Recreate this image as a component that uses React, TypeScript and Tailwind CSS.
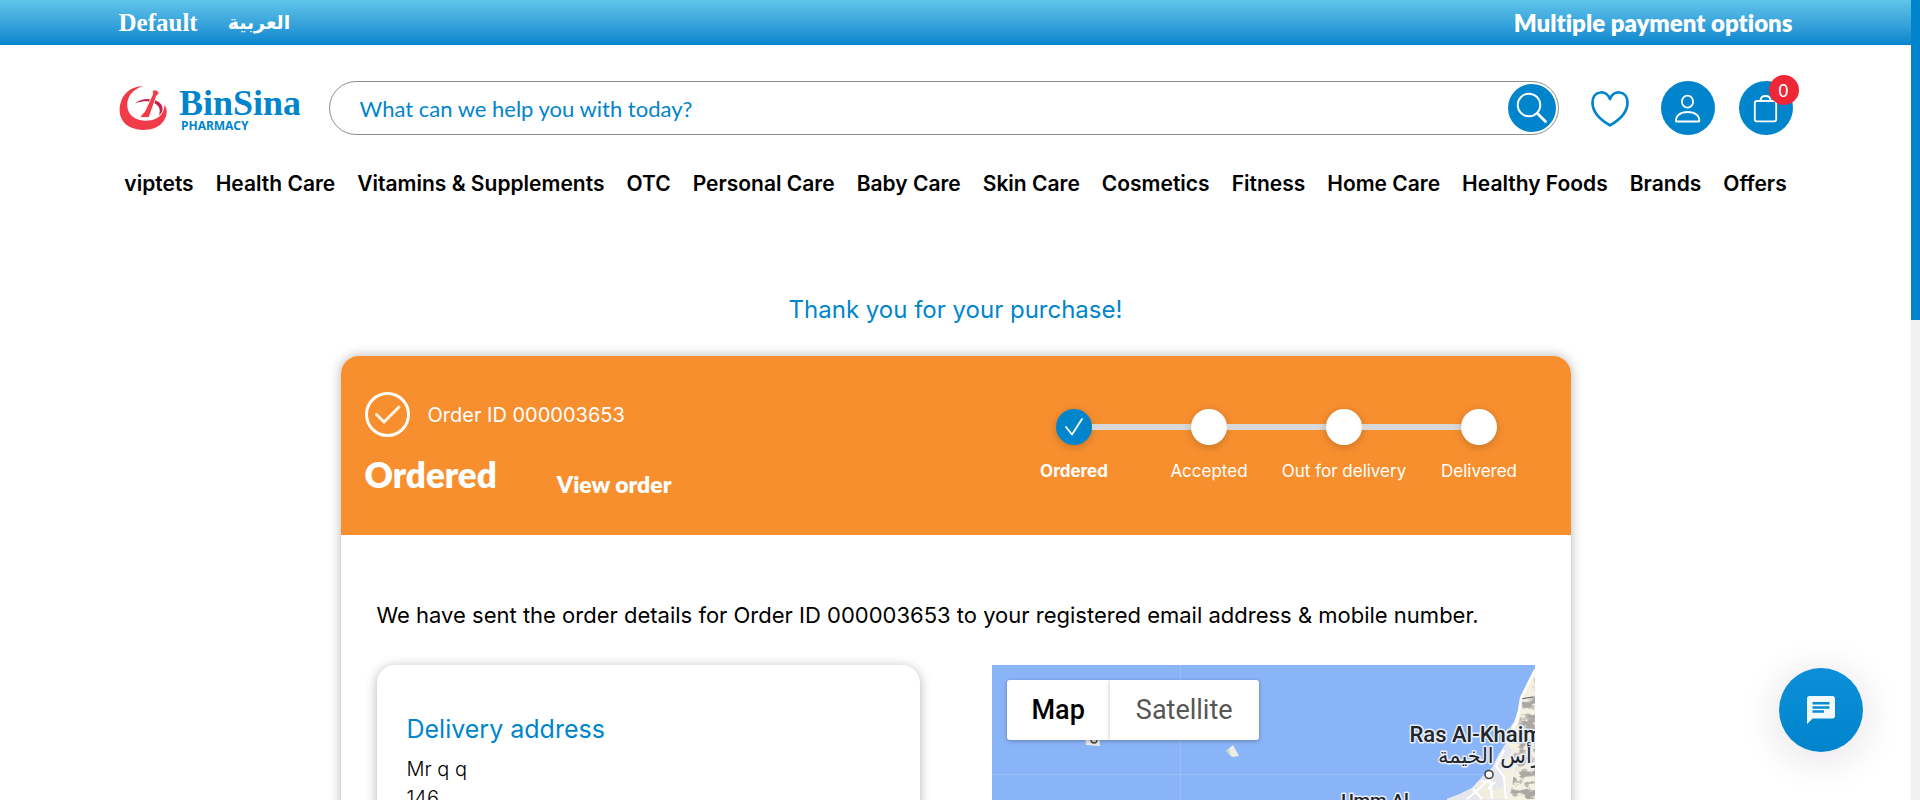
import React from "react";

const categories = [
  "viptets",
  "Health Care",
  "Vitamins & Supplements",
  "OTC",
  "Personal Care",
  "Baby Care",
  "Skin Care",
  "Cosmetics",
  "Fitness",
  "Home Care",
  "Healthy Foods",
  "Brands",
  "Offers",
];

const steps = [
  { label: "Ordered", done: true },
  { label: "Accepted", done: false },
  { label: "Out for delivery", done: false },
  { label: "Delivered", done: false },
];

function Logo() {
  return (
    <svg width="181" height="50" viewBox="0 0 181 50" role="img" aria-label="BinSina Pharmacy">
      <path d="M16 20.500C21 15.500 32 14.500 39 18.500C44.500 22 45.500 28 40 32.500C42 26 40 21.500 33 19.200C27 17.300 21 18.300 16 20.500Z" fill="#c4234f" />
      <path d="M24.500 3.200C16 2.500 6 8 3 16C-1.500 26 0 38 10 43.500C20 49 36 48 43 40C48.500 34 49 26 45.500 22C45.500 29 41 35 33.500 37C23 39.500 12 36 9 27C6 17 12 6 24.500 3.200Z" fill="#f23b48" />
      <path d="M33.500 8C34.500 6 39 7 40 10C40 11.500 38.500 11.500 37.700 12.500L30 34.500L21.500 34.500C21.500 31.500 24.500 31 26 28L33.800 11C34 9.800 33.300 9.200 33.500 8Z" fill="#f23b48" stroke="#fff" strokeWidth="0.800" />
      <text x="60" y="32" fontFamily="'Liberation Serif', serif" fontWeight="700" fontSize="36" fill="#0085cd">BinSina</text>
      <text x="62" y="47" fontFamily="'Noto Sans', sans-serif" fontWeight="700" fontSize="12" fill="#0085cd">PHARMACY</text>
    </svg>
  );
}

function TopBar() {
  return (
    <div className="bg-linear-to-b from-[#5fc5ea] to-[#0085cd] font-['Lato',sans-serif] text-white">
      <div className="mx-auto flex h-[45px] max-w-[1722px] items-center justify-between px-6 font-bold">
        <div className="flex items-center gap-[30px]">
          <a href="#default" className="font-['Liberation_Serif',serif] text-[25px]">Default</a>
          <a href="#ar" lang="ar" className="font-['DejaVu_Sans',sans-serif] text-[19px]">العربية</a>
        </div>
        <span className="text-2xl font-extrabold [font-variant-ligatures:none]">Multiple payment options</span>
      </div>
    </div>
  );
}

function Header() {
  return (
    <header className="mx-auto max-w-[1722px] px-6 pt-9">
      <div className="flex items-center gap-6">
        <a href="#home" className="mr-[5px] shrink-0">
          <Logo />
        </a>
        <form className="flex h-[54px] min-w-0 flex-1 items-center rounded-full border border-[#8f8f8f] pr-[2px] pl-[30px]">
          <input
            type="text"
            aria-label="Search"
            placeholder="What can we help you with today?"
            className="min-w-0 flex-1 bg-transparent font-['Lato',sans-serif] text-[22px] text-[#0085cd] outline-none placeholder:text-[#0085cd] placeholder:opacity-100"
          />
          <button type="button" aria-label="Search" className="flex size-12 items-center justify-center rounded-full bg-[#0085cd]">
            <svg width="48" height="48" viewBox="0 0 48 48" fill="none" stroke="#fff" strokeWidth="1.900" strokeLinecap="round">
              <circle cx="21" cy="21" r="11.300" />
              <path d="M29.500 29.500L37.500 37.500" strokeWidth="2.800" />
            </svg>
          </button>
        </form>
        <button type="button" aria-label="Wishlist" className="flex size-[54px] items-center justify-center">
          <svg width="40" height="40" viewBox="0 0 40 40" fill="none" stroke="#0085cd" strokeWidth="2.700" strokeLinejoin="round">
            <path d="M20 11C18.500 6.500 14.500 4.200 10.500 4.500C5.500 5 2.500 9 2.500 14.500C2.500 25 10.500 32 20 37.300C29.500 32 37.500 25 37.500 14.500C37.500 9 34.500 5 29.500 4.500C25.500 4.200 21.500 6.500 20 11Z" />
          </svg>
        </button>
        <button type="button" aria-label="Account" className="flex size-[54px] items-center justify-center rounded-full bg-[#0085cd]">
          <svg width="54" height="54" viewBox="0 0 54 54" fill="none" stroke="#fff" strokeWidth="1.800" strokeLinejoin="round">
            <ellipse cx="26.500" cy="20.700" rx="5.600" ry="6" />
            <path d="M15 40.500C14.500 34.500 19.500 31 26.700 31S38.800 34.500 38.300 40.500Z" />
          </svg>
        </button>
        <button type="button" aria-label="Cart" className="relative flex size-[54px] items-center justify-center rounded-full bg-[#0085cd]">
          <svg width="54" height="54" viewBox="0 0 54 54" fill="none" stroke="#fff" strokeWidth="1.800">
            <rect x="15.800" y="20" width="21.400" height="20.300" rx="2" />
            <path d="M21.500 20C21.500 16.800 23.500 15 26.500 15S31.500 16.800 31.500 20" />
          </svg>
          <span className="absolute -top-[6px] -right-[6px] flex size-[30px] items-center justify-center rounded-full bg-[#ee2737] font-['Noto_Sans',sans-serif] text-lg text-white">
            0
          </span>
        </button>
      </div>
      <nav className="mt-[37px] flex flex-wrap justify-center gap-x-[22px] text-[21px] leading-6 font-semibold text-black">
        {categories.map((name) => (
          <a key={name} href="#category" className="whitespace-nowrap">
            {name}
          </a>
        ))}
      </nav>
    </header>
  );
}

function Progress() {
  return (
    <ol className="mt-[53px] mr-6 grid w-[540px] shrink-0 grid-cols-4">
      {steps.map((step, i) => (
        <li key={step.label} className="flex flex-col items-center">
          <div className="flex w-full items-center">
            <span className={`h-[6px] flex-1 ${i === 0 ? "bg-transparent" : "bg-[#d8d8d8]"}`} />
            <span
              className={`flex size-9 items-center justify-center rounded-full shadow-[0_2px_8px_rgba(0,0,0,0.2)] ${
                step.done ? "bg-[#0085cd]" : "bg-white"
              }`}
            >
              {step.done && (
                <svg width="36" height="36" viewBox="0 0 36 36" fill="none" stroke="#fff" strokeWidth="1.800" strokeLinecap="round" strokeLinejoin="round">
                  <path d="M10 18L16 25.500L26 10" />
                </svg>
              )}
            </span>
            <span className={`h-[6px] flex-1 ${i === steps.length - 1 ? "bg-transparent" : "bg-[#d8d8d8]"}`} />
          </div>
          <span className={`mt-[14px] text-[17px] leading-6 whitespace-nowrap ${step.done ? "font-bold" : ""}`}>{step.label}</span>
        </li>
      ))}
    </ol>
  );
}

function MapView() {
  return (
    <div className="relative h-[400px] overflow-hidden bg-[#8ab4f8]">
      <svg className="size-full" viewBox="0 0 543 400" preserveAspectRatio="xMinYMin slice" aria-label="Map of Ras Al-Khaimah">
        <defs>
          <filter id="relief" x="0" y="0" width="100%" height="100%">
            <feTurbulence type="fractalNoise" baseFrequency="0.090 0.160" numOctaves="4" seed="8" result="n" />
            <feColorMatrix in="n" type="matrix" values="0 0 0 0 0.400  0 0 0 0 0.390  0 0 0 0 0.370  5 0 0 0 -2.100" result="c" />
            <feComposite in="c" in2="SourceGraphic" operator="in" />
          </filter>
        </defs>
        <path d="M188.500 0V400M0 109.500H543" stroke="#9cbff8" strokeWidth="1" />
        <path d="M93 70H107L108 81L94 80Z" fill="#eeebe2" />
        <circle cx="102" cy="75" r="3" fill="#dcdcdc" stroke="#444" strokeWidth="1.300" />
        <path d="M234 86L241 80L247 91L240 92Z" fill="#eeece4" />
        <path d="M235 86L238 90L237 84Z" fill="#a8dfb3" />
        <path d="M543 3L537 14L528 32L526 45L522 57L515 67L514 78L507 89L500 103L491 111L480 123L468 129L455 134V400H543Z" fill="#f4f0e2" />
        <path d="M515 79L507 89L500 103L491 111L480 123L468 129L455 134V160H505L515 135L514 115L508 100L521 86Z" fill="#e5e7ed" />
        <path d="M484 118L494 116L502 125L512 122L514 134H487Z" fill="#f1eddf" />
        <path d="M543 12L536 24L530 38L532 54L523 72L528 90L522 108L518 134H543Z" fill="#efebdd" filter="url(#relief)" />
        <path d="M543 22L531 41L525 64L530 80L521 90L524 104L517 134H543Z" fill="#aaa" opacity="0.700" filter="url(#relief)" />
        <path d="M528 34L541 32" stroke="#555" strokeWidth="1" />
        <path d="M514 65L519 61L520 66Z" fill="#a5dcb4" />
        <g fill="none" stroke="#fff" strokeWidth="2.200">
          <path d="M543 5L529 34L525 57L516 70M512 85L504 101L512 112L514 134M498 113L488 123L475 134M489 116L502 118L496 124M498 111L500 134M481 124L490 134" />
        </g>
        <circle cx="497" cy="109.500" r="4" fill="#fff" stroke="#444" strokeWidth="1.600" />
        <g textAnchor="middle" fill="#222529" stroke="#e9effa" strokeWidth="3" strokeLinejoin="round" paintOrder="stroke" fontWeight="500">
          <text x="496" y="77" fontFamily="Roboto, sans-serif" fontSize="22">Ras Al-Khaimah</text>
          <text x="498" y="98" fontFamily="'DejaVu Sans', sans-serif" fontSize="21" fontWeight="400" direction="rtl">رأس الخيمة</text>
          <text x="383" y="142" fontFamily="Roboto, sans-serif" fontSize="19">Umm Al</text>
        </g>
      </svg>
      <div className="absolute top-[15px] left-[15px] flex h-[60px] overflow-hidden rounded-[3px] bg-white font-['Roboto',sans-serif] text-[27px] shadow-[0_1px_4px_rgba(0,0,0,0.3)]">
        <button type="button" className="px-[25px] font-medium text-black">Map</button>
        <button type="button" className="px-[26px] text-[#565656] shadow-[0_0_4px_rgba(0,0,0,0.25)]">Satellite</button>
      </div>
    </div>
  );
}

function OrderCard() {
  return (
    <section className="mx-auto mt-[30px] max-w-[1230px] overflow-hidden rounded-t-[18px] bg-white shadow-[0_0_12px_rgba(0,0,0,0.3)]">
      <div className="flex min-h-[179px] justify-between bg-[#f78f2f] pl-6 text-white">
        <div className="pt-9">
          <div className="flex items-center gap-[17px]">
            <svg width="46" height="46" viewBox="0 0 46 46" fill="none" stroke="#fff" strokeWidth="3" strokeLinecap="round" strokeLinejoin="round">
              <circle cx="22.500" cy="22.500" r="21" />
              <path d="M11.500 22.500L19 30L34 15" stroke="#fff3e6" />
            </svg>
            <span className="text-xl">Order ID 000003653</span>
          </div>
          <div className="mt-3 flex items-end gap-[60px] font-['Lato',sans-serif] font-extrabold">
            <h2 className="pb-[10px] text-[35px] leading-[48px]">Ordered</h2>
            <a href="#order" className="text-[23px] leading-[48px]">View order</a>
          </div>
        </div>
        <Progress />
      </div>
      <div className="px-9 pt-16">
        <p className="text-[22px] leading-8 text-black">
          We have sent the order details for Order ID 000003653 to your registered email address &amp; mobile number.
        </p>
        <div className="mt-[34px] grid grid-cols-2 gap-[72px]">
          <div className="h-[400px] rounded-[18px] bg-white px-[30px] pt-12 shadow-[0_2px_12px_rgba(0,0,0,0.3)]">
            <h3 className="text-[25px] leading-8 text-[#0085cd]">Delivery address</h3>
            <p className="mt-[10px] text-xl leading-[29px] font-light text-black">
              Mr q q<br />
              146
            </p>
          </div>
          <MapView />
        </div>
      </div>
    </section>
  );
}

export default function App() {
  return (
    <div className="flex h-screen bg-white font-['Inter',sans-serif]">
      <div className="min-w-0 flex-1 overflow-x-hidden overflow-y-auto [scrollbar-width:none]">
        <TopBar />
        <Header />
        <main>
          <h1 className="mt-[98px] text-center text-2xl leading-8 text-[#0085cd]">Thank you for your purchase!</h1>
          <OrderCard />
        </main>
      </div>
      <div className="w-[9px] shrink-0 bg-[#f0f0f0]">
        <div className="h-2/5 bg-[#0085cd]" />
      </div>
      <button
        type="button"
        aria-label="Open chat"
        className="fixed right-[57px] bottom-12 flex size-[84px] items-center justify-center rounded-full bg-linear-to-b from-[#0c8fd6] to-[#0085cd] shadow-[0_6px_40px_rgba(60,20,60,0.14)]"
      >
        <svg width="28" height="28" viewBox="0 0 28 28">
          <path d="M2.500 0H25.500C27 0 28 1 28 2.500V20C28 21.500 27 22.500 25.500 22.500H5.500L0 28V2.500C0 1 1 0 2.500 0Z" fill="#f2f9fd" />
          <path d="M5.500 7.200H22.500M5.500 11.500H22.500M5.500 15.500H17" stroke="#0a8bd2" strokeWidth="2.500" />
        </svg>
      </button>
    </div>
  );
}
